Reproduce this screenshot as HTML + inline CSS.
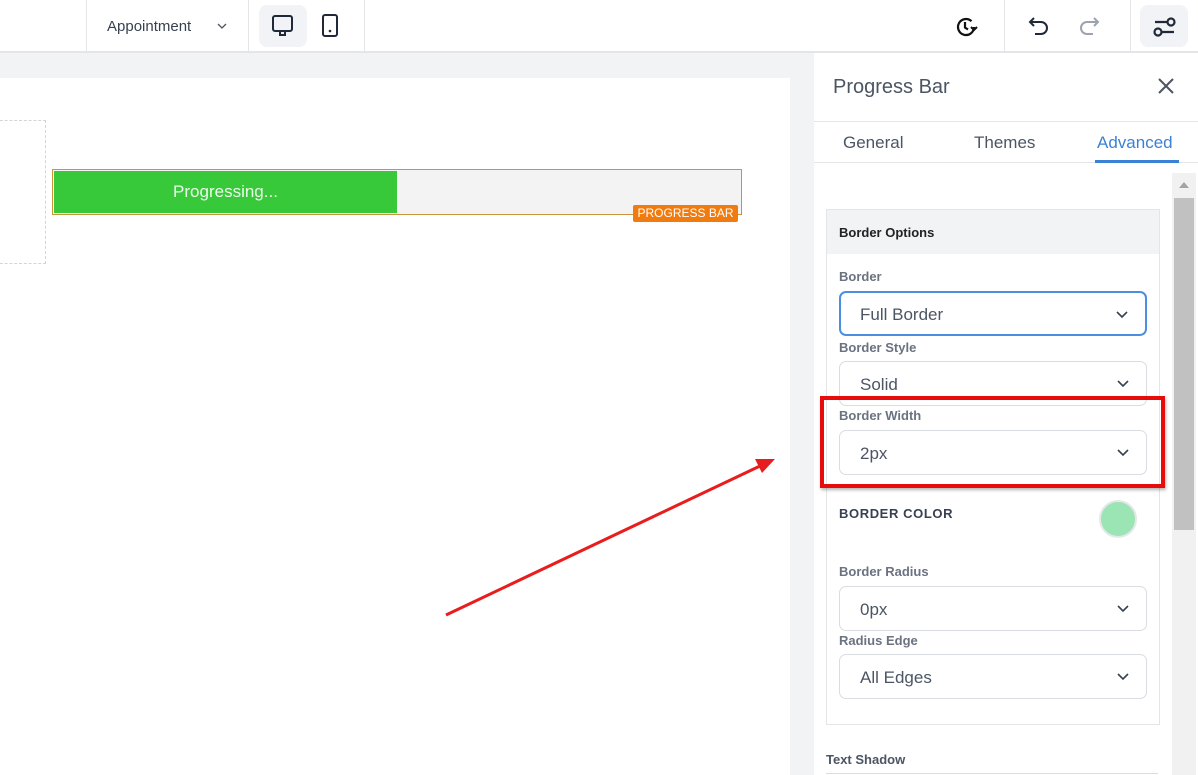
<!DOCTYPE html>
<html style="overflow:hidden"><head><meta charset="utf-8"><style>
*{box-sizing:border-box;margin:0;padding:0}
html,body{width:1198px;height:775px;overflow:hidden}
body{position:relative;background:#f2f3f5;font-family:"Liberation Sans",sans-serif}
.a{position:absolute}
.lbl{position:absolute;left:839px;font-size:13px;font-weight:bold;color:#6b7280}
.sel{position:absolute;left:839px;width:308px;height:45px;border:1px solid #d9dce1;border-radius:7px;background:#fff;font-size:17px;color:#4b5563;padding:13px 0 0 20px}
.sel svg{position:absolute;right:16px;top:17px}
</style></head><body>
<div class="a" style="left:0;top:0;width:1198px;height:53px;background:#fff;border-bottom:2px solid #e3e5e8"></div>
<div class="a" style="left:86px;top:0;width:1px;height:52px;background:#e3e5e8"></div>
<div class="a" style="left:248px;top:0;width:1px;height:52px;background:#e3e5e8"></div>
<div class="a" style="left:364px;top:0;width:1px;height:52px;background:#e3e5e8"></div>
<div class="a" style="left:1004px;top:0;width:1px;height:52px;background:#e3e5e8"></div>
<div class="a" style="left:1130px;top:0;width:1px;height:52px;background:#e3e5e8"></div>
<div class="a" style="left:107px;top:18px;font-size:15px;color:#374151">Appointment</div>
<svg class="a" style="left:216px;top:21px" width="12" height="10"><path d="M2 3l4 4 4-4" stroke="#4b5563" fill="none" stroke-width="1.3"/></svg>
<div class="a" style="left:259px;top:5px;width:48px;height:42px;background:#f1f3f6;border-radius:8px"></div>
<svg class="a" style="left:271px;top:14px" width="24" height="24"><rect x="2" y="2" width="19" height="15" rx="2" fill="none" stroke="#1f2937" stroke-width="2"/><path d="M9 18v3h5v-3" fill="none" stroke="#1f2937" stroke-width="2"/></svg>
<svg class="a" style="left:320px;top:13px" width="22" height="26"><rect x="3" y="2" width="14" height="21" rx="2" fill="none" stroke="#1f2937" stroke-width="2"/><circle cx="10" cy="18" r="1.3" fill="#1f2937"/></svg>
<svg class="a" style="left:954px;top:14px" width="26" height="26"><path d="M20 13a8 8 0 1 1-2.5-5.8" fill="none" stroke="#111" stroke-width="2.2"/><path d="M11 8v5.5l3 2" fill="none" stroke="#111" stroke-width="2.2"/><path d="M17 13l3 3 3-3" fill="none" stroke="#111" stroke-width="2"/></svg>
<svg class="a" style="left:1028px;top:14px" width="24" height="24"><path d="M6 4L2 8l4 4M2 8h11a6 6 0 0 1 0 12H7" fill="none" stroke="#1f2937" stroke-width="2"/></svg>
<svg class="a" style="left:1076px;top:14px" width="24" height="24"><path d="M18 4l4 4-4 4M22 8H11a6 6 0 0 0 0 12h6" fill="none" stroke="#9ca3af" stroke-width="2"/></svg>
<div class="a" style="left:1140px;top:5px;width:48px;height:42px;background:#f1f3f6;border-radius:8px"></div>
<svg class="a" style="left:1152px;top:14px" width="26" height="26"><path d="M3 8h12M9 18h13" stroke="#1f2937" stroke-width="2.2"/><circle cx="19" cy="8" r="3.5" fill="none" stroke="#1f2937" stroke-width="2.2"/><circle cx="6" cy="18" r="3.5" fill="none" stroke="#1f2937" stroke-width="2.2"/></svg>
<div class="a" style="left:0;top:78px;width:790px;height:697px;background:#fff"></div>
<div class="a" style="left:-5px;top:120px;width:51px;height:144px;border:1px dashed #d4d4d4"></div>
<div class="a" style="left:52px;top:169px;width:690px;height:46px;border:1px solid #c9953b;background:#f3f3f3"></div>
<div class="a" style="left:54px;top:171px;width:343px;height:42px;background:#38c93a;color:#eafbe9;font-size:17px;text-align:center;line-height:42px">Progressing...</div>
<div class="a" style="left:633px;top:205px;width:105px;height:17px;background:#f27b0f;color:#fff;font-size:12px;text-align:center;line-height:17px;border-radius:2px">PROGRESS BAR</div>
<svg class="a" style="left:0;top:0" width="800" height="775"><line x1="446" y1="615" x2="760" y2="466" stroke="#e81d1d" stroke-width="3"/><path d="M775 459l-20 0 7 14z" fill="#e81d1d"/></svg>
<div class="a" style="left:814px;top:53px;width:384px;height:722px;background:#fff"></div>
<div class="a" style="left:833px;top:76px;font-size:20px;color:#4b5563">Progress Bar</div>
<svg class="a" style="left:1157px;top:77px" width="18" height="18"><path d="M2 2l14 14M16 2L2 16" stroke="#4b5563" stroke-width="2"/></svg>
<div class="a" style="left:814px;top:121px;width:384px;height:1px;background:#e3e5e8"></div>
<div class="a" style="left:843px;top:133px;font-size:17px;color:#4b5563">General</div>
<div class="a" style="left:974px;top:133px;font-size:17px;color:#4b5563">Themes</div>
<div class="a" style="left:1097px;top:133px;font-size:17px;color:#3b82d6">Advanced</div>
<div class="a" style="left:814px;top:162px;width:384px;height:1px;background:#e3e5e8"></div>
<div class="a" style="left:1095px;top:160px;width:84px;height:3px;background:#3b82d6"></div>
<div class="a" style="left:1172px;top:173px;width:24px;height:602px;background:#f1f1f1"></div>
<div class="a" style="left:1174px;top:198px;width:20px;height:332px;background:#c1c1c1"></div>
<svg class="a" style="left:1178px;top:181px" width="12" height="8"><path d="M1 7l5-6 5 6z" fill="#a3a3a3"/></svg>
<div class="a" style="left:826px;top:209px;width:334px;height:516px;border:1px solid #e3e5e8;background:#fff"></div>
<div class="a" style="left:827px;top:210px;width:332px;height:44px;background:#f2f3f5"></div>
<div class="a" style="left:839px;top:225px;font-size:13px;font-weight:bold;color:#222">Border Options</div>
<div class="lbl" style="top:269px">Border</div>
<div class="sel" style="top:291px;border:2px solid #4a8fe0;padding-left:19px;padding-top:12px">Full Border<svg width="14" height="10"><path d="M2 2l5 5 5-5" stroke="#374151" fill="none" stroke-width="1.6"/></svg></div>
<div class="lbl" style="top:340px">Border Style</div>
<div class="sel" style="top:361px">Solid<svg width="14" height="10"><path d="M2 2l5 5 5-5" stroke="#374151" fill="none" stroke-width="1.6"/></svg></div>
<div class="lbl" style="top:408px">Border Width</div>
<div class="sel" style="top:430px">2px<svg width="14" height="10"><path d="M2 2l5 5 5-5" stroke="#374151" fill="none" stroke-width="1.6"/></svg></div>
<div class="a" style="left:820px;top:396px;width:345px;height:92px;border:4px solid #e60c0c;box-shadow:1px 2px 3px rgba(0,0,0,.3)"></div>
<div class="a" style="left:839px;top:506px;font-size:13px;font-weight:bold;color:#374151;letter-spacing:.6px">BORDER COLOR</div>
<div class="a" style="left:1099px;top:500px;width:38px;height:38px;border-radius:50%;background:#9be5b5;border:2px solid #e5e7eb"></div>
<div class="lbl" style="top:564px">Border Radius</div>
<div class="sel" style="top:586px">0px<svg width="14" height="10"><path d="M2 2l5 5 5-5" stroke="#374151" fill="none" stroke-width="1.6"/></svg></div>
<div class="lbl" style="top:633px">Radius Edge</div>
<div class="sel" style="top:654px">All Edges<svg width="14" height="10"><path d="M2 2l5 5 5-5" stroke="#374151" fill="none" stroke-width="1.6"/></svg></div>
<div class="a" style="left:826px;top:752px;font-size:13px;font-weight:bold;color:#4b5563">Text Shadow</div>
<div class="a" style="left:826px;top:773px;width:332px;height:2px;border-top:1px solid #d9dce1"></div>
</body></html>
